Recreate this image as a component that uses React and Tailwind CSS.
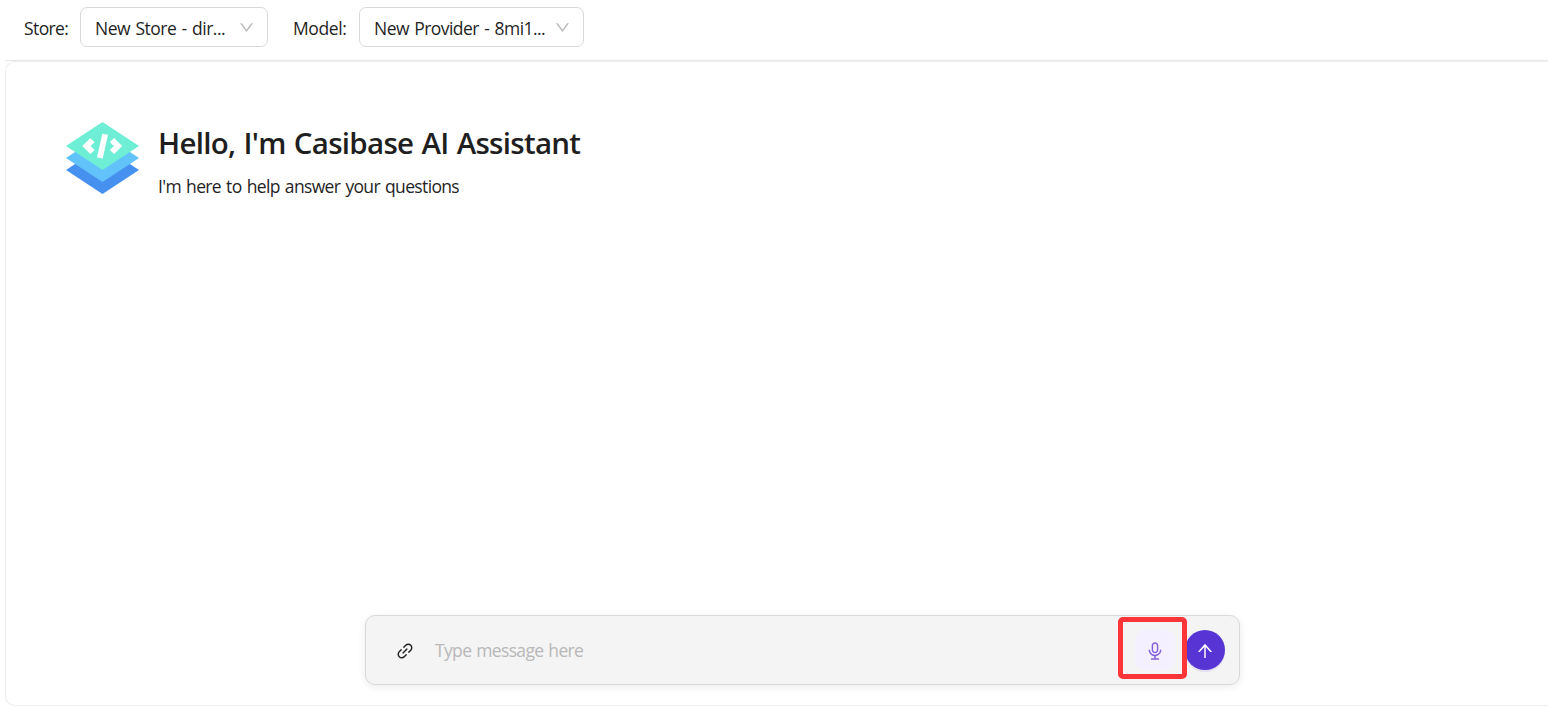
import { AiOutlineLink, AiOutlineAudio, AiOutlineArrowUp, AiOutlineDown } from "react-icons/ai";

function Select({ className, textClass, children }) {
  return (
    <button className={`flex h-10 items-center justify-between rounded-[7px] border border-[#d9d9d9] bg-white pl-3.5 pr-3 ${className}`}>
      <span className={`whitespace-nowrap pt-0.5 ${textClass}`}>{children}</span>
      <AiOutlineDown className="size-[17px] text-[#b8b8b8]" />
    </button>
  );
}

function Logo() {
  return (
    <svg className="h-[72px] w-[73px] shrink-0" viewBox="0 0 73 72">
      <path d="M0 48 36.500 24 73 48 36.500 72Z" fill="#4690f0" />
      <path d="M0 36 36.500 12 73 36 36.500 60Z" fill="#62c3fa" />
      <path d="M0 24 36.500 0 73 24 36.500 48Z" fill="#6eeed4" />
      <path d="M26.500 18 20.500 24 26.500 30M46 18 52 24 46 30" fill="none" stroke="#fff" strokeWidth="6" />
      <path d="M36.300 11.800 42 12.800 36.700 36.400 31 35.400Z" fill="#fff" />
    </svg>
  );
}

export default function App() {
  return (
    <div className="flex h-[707px] flex-col overflow-hidden bg-white pl-[5px] font-['Open_Sans',sans-serif] text-[17.5px] text-[#1f1f1f]">
      <header className="flex h-[61px] shrink-0 items-start border-b border-[#e6e6e6] pl-[19px] pt-[7px]">
        <span className="flex h-10 w-14 items-center whitespace-nowrap pt-0.5 tracking-[-0.6px]">Store:</span>
        <Select className="w-[188px]" textClass="tracking-[-0.5px] [word-spacing:1.3px]">New Store - dir...</Select>
        <span className="ml-[25px] flex h-10 w-[66px] items-center whitespace-nowrap pt-0.5 tracking-[-0.4px]">Model:</span>
        <Select className="w-[225px]" textClass="tracking-[-0.55px] [word-spacing:1.3px]">New Provider - 8mi1...</Select>
      </header>
      <main className="flex h-[645px] shrink-0 flex-col justify-between rounded-l-[10px] border border-r-0 border-[#ededed] pb-5 pl-[60px] pt-[60px]">
        <section className="flex gap-5">
          <Logo />
          <div className="-ml-px">
            <h1 className="h-[46px] whitespace-nowrap text-[29.5px] font-semibold leading-[42px] tracking-[-0.7px] [word-spacing:1.1px]">Hello, I'm Casibase AI Assistant</h1>
            <p className="whitespace-nowrap leading-[37px] tracking-[-0.65px] [word-spacing:1.2px]">I'm here to help answer your questions</p>
          </div>
        </section>
        <form className="relative ml-[299px] flex h-[70px] w-[875px] items-center rounded-[10px] border border-[#d9d9d9] bg-[#f4f4f4] pl-[29px] pr-3.5 shadow-[0_2px_8px_rgba(0,0,0,0.08)]">
          <AiOutlineLink className="mt-px size-5 shrink-0" />
          <span className="ml-5 flex-1 whitespace-nowrap pt-px tracking-[-0.65px] text-[#b8b8b8] [word-spacing:1px]">Type message here</span>
          <button type="button" className="mr-2.5 flex size-10 items-center justify-center rounded-[10px] bg-[#f5f0ff] text-[#8560dc]">
            <AiOutlineAudio className="mt-0.5 size-5" />
          </button>
          <button type="button" className="flex size-10 items-center justify-center rounded-full bg-[#5734d3] text-white shadow-[0_2px_0_rgba(87,52,211,0.1)]">
            <AiOutlineArrowUp className="mt-px size-5" />
          </button>
          <div className="absolute left-[751.500px] top-[1.300px] h-[61.500px] w-[69px] rounded-[5px] border-[5px] border-[#fc3638]" />
        </form>
      </main>
    </div>
  );
}
